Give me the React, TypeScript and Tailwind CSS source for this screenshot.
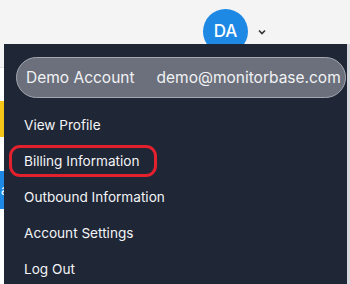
import React from "react";

export default function App() {
  const items = [
    "View Profile",
    "Billing Information",
    "Outbound Information",
    "Account Settings",
    "Log Out",
  ];
  return (
    <div
      className="relative w-[350px] h-[284px] overflow-hidden bg-white"
      style={{ fontFamily: "Inter, 'Noto Sans', sans-serif" }}
    >
      {/* page header */}
      <div className="h-[68px] bg-[#f4f4f4] border-b border-[#e2e2e2] flex items-start justify-end pr-[84px] pt-[9px]">
        <div className="w-[45px] h-[45px] rounded-full bg-[#1e88e5] flex items-center justify-center text-white text-[17px] font-medium">
          DA
        </div>
        <div className="ml-[10px] mt-[20px]">
          <svg width="8" height="6" viewBox="0 0 8 6">
            <polyline points="1,1.5 4,4.5 7,1.5" fill="none" stroke="#333" strokeWidth="1.6" />
          </svg>
        </div>
      </div>
      {/* page content peeking at left */}
      <div className="flex flex-col">
        <div className="h-[33px]" />
        <div className="h-[36px] w-[40px] bg-[#f5c518]" />
        <div className="h-[34px]" />
        <div className="h-[38px] w-[60px] bg-[#1e88e5] text-white text-[13px] leading-[38px] whitespace-nowrap pl-[1px]">
          a
        </div>
      </div>
      <div className="absolute right-0 top-[44px] bottom-0 w-[3px] bg-[#d6d8de]" />

      {/* dropdown menu */}
      <div className="absolute left-[4px] top-[44px] w-[343px] h-[260px] bg-[#1f2636] pt-[13px]">
        <div className="ml-[12px] mr-[1px] h-[41px] rounded-full bg-[#6b707c] border-[1.5px] border-[#a3a7b0] flex items-center pl-[9px] text-[15.5px] text-[#f1f2f4] whitespace-nowrap">
          <span>Demo Account</span>
          <span className="ml-[22px]">demo@monitorbase.com</span>
        </div>
        <div className="mt-[9px] flex flex-col">
          {items.map((it) => (
            <div key={it} className="h-[36px] flex items-center pl-[20px] text-[13.6px] text-[#f3f4f6] whitespace-nowrap">
              {it === "Billing Information" ? (
                <span className="-ml-[15px] pl-[12px] pr-[14px] py-[3px] rounded-[11px] border-[3px] border-[#e3202d]">
                  {it}
                </span>
              ) : (
                <span>{it}</span>
              )}
            </div>
          ))}
        </div>
      </div>
    </div>
  );
}
